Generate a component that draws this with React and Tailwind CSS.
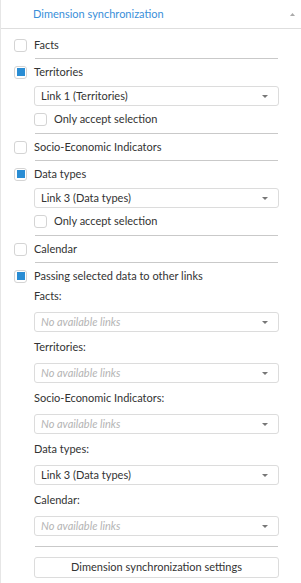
import React from "react";

const Checkbox = ({ checked }) => (
  <span className="w-[13px] h-[13px] shrink-0 rounded-[3px] border border-[#d4d4d4] bg-white flex items-center justify-center">
    {checked && <span className="w-[8px] h-[8px] bg-[#2a8dd4]" />}
  </span>
);

const Caret = () => (
  <svg width="6" height="3" viewBox="0 0 6 3" className="shrink-0">
    <path d="M0 0h6L3 3z" fill="#777" />
  </svg>
);

const Select = ({ value }) => (
  <div className="h-[20px] ml-[33px] mr-[22px] rounded-[3px] border border-[#dcdcdc] bg-white flex items-center justify-between pl-[6px] pr-[10px]">
    {value ? (
      <span className="text-[#333] mb-[2px]">{value}</span>
    ) : (
      <span className="italic text-[#b4b4b4] mb-[2px]">No available links</span>
    )}
    <Caret />
  </div>
);

const Sep = () => <div className="h-px bg-[#c9c9c9] ml-[34px] mr-[23px]" />;

const Row = ({ checked, label }) => (
  <div className="h-[26px] flex items-center pl-[13px] gap-[7px]">
    <Checkbox checked={checked} />
    <span className="text-[#333] mb-[2px]">{label}</span>
  </div>
);

const OnlyAccept = () => (
  <div className="h-[26px] flex items-center pl-[33px] gap-[7px]">
    <Checkbox />
    <span className="text-[#333] mb-[2px]">Only accept selection</span>
  </div>
);

const Label = ({ children, first }) => (
  <div
    className={`flex items-center pl-[33px] text-[#333] ${
      first ? "h-[23px] pb-[10px]" : "h-[31px] pb-[2px]"
    }`}
  >
    {children}
  </div>
);

export default function App() {
  return (
    <div
      className="w-[301px] h-[583px] bg-white border-l border-[#e6e6e6] text-[11px] leading-none overflow-hidden"
      style={{ fontFamily: "'Segoe UI', Lato, Tahoma, sans-serif" }}
    >
      <div className="h-[29px] flex items-center justify-between pl-[32px] pr-[6px] border-b border-[#dedede]">
        <span className="text-[#3a8fd9] mb-[2px]">Dimension synchronization</span>
        <svg width="5" height="3" viewBox="0 0 5 3">
          <path d="M0 3h5L2.5 0z" fill="#aaa" />
        </svg>
      </div>

      <div className="pt-[3px]">
        <Row label="Facts" />
        <Sep />
        <Row checked label="Territories" />
        <div className="pt-[1px]">
          <Select value="Link 1 (Territories)" />
        </div>
        <OnlyAccept />
        <div className="pt-[1px]">
          <Sep />
        </div>
        <Row label="Socio-Economic Indicators" />
        <Sep />
        <Row checked label="Data types" />
        <div className="pt-[1px]">
          <Select value="Link 3 (Data types)" />
        </div>
        <OnlyAccept />
        <div className="pt-[1px]">
          <Sep />
        </div>
        <Row label="Calendar" />
        <Sep />
        <Row checked label="Passing selected data to other links" />

        <Label first>Facts:</Label>
        <Select />
        <Label>Territories:</Label>
        <Select />
        <Label>Socio-Economic Indicators:</Label>
        <Select />
        <Label>Data types:</Label>
        <Select value="Link 3 (Data types)" />
        <Label>Calendar:</Label>
        <Select />

        <div className="pt-[10px]">
          <Sep />
        </div>
        <div className="pt-[10px]">
          <div className="h-[21px] ml-[33px] mr-[22px] rounded-[3px] border border-[#dcdcdc] bg-white flex items-center justify-center text-[#333]">
            <span className="mb-[2px]">Dimension synchronization settings</span>
          </div>
        </div>
      </div>
    </div>
  );
}
